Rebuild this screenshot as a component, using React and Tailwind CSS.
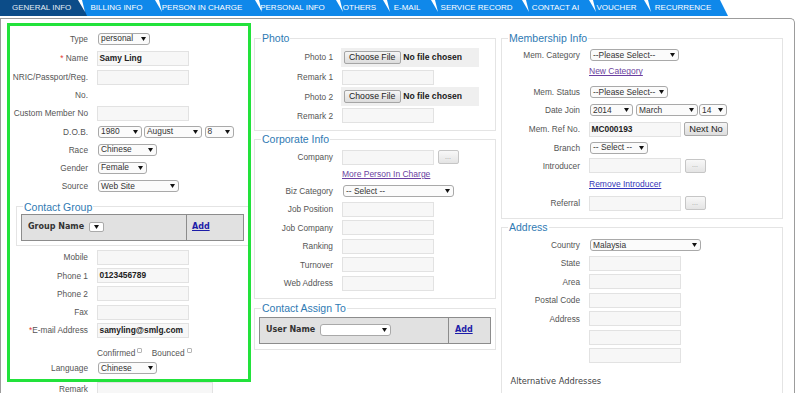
import React from 'react';

const tabs = [
  ['BILLING INFO', 'w-[77px] pr-[4px]'],
  ['PERSON IN CHARGE', 'w-[100px] pr-[10px]'],
  ['PERSONAL INFO', 'w-[81px] pr-[10px]'],
  ['OTHERS', 'w-[47px] pr-[4px]'],
  ['E-MAIL', 'w-[48px] pr-[4px]'],
  ['SERVICE RECORD', 'w-[91px] pr-[4px]'],
  ['CONTACT AI', 'w-[67px] pr-[4px]'],
  ['VOUCHER', 'w-[55px] pr-[4px]'],
  ['RECURRENCE', 'w-[82px] pr-[8px]'],
];

function Notch() {
  return (
    <svg className="absolute -left-[2px] top-0" width="8" height="13" viewBox="0 0 8 13">
      <polygon points="0,0 4,0 7,12" fill="#ffffff" />
    </svg>
  );
}

function Tabs() {
  return (
    <div className="flex h-[16px] w-[728px] bg-[#0f88ea] [clip-path:polygon(0_0,720px_0,728px_100%,0_100%)]">
      <div className="-mr-[7px] flex w-[87px] shrink-0 items-center bg-[#0c4c88] pl-[12px] text-[8px] leading-none whitespace-nowrap text-[#e4edf5] [clip-path:polygon(0_0,80px_0,87px_100%,0_100%)]">
        GENERAL INFO
      </div>
      {tabs.map(([name, w]) => (
        <div key={name} className={`relative flex shrink-0 items-center justify-center text-[8px] leading-none whitespace-nowrap text-white ${w}`}>
          <Notch />
          {name}
        </div>
      ))}
    </div>
  );
}

function Caret() {
  return (
    <svg width="5" height="4" viewBox="0 0 5 4" className="shrink-0">
      <polygon points="0,0 5,0 2.5,4" fill="#111" />
    </svg>
  );
}

function Select({ value, w, bg = 'bg-[#fbfbfb]' }) {
  return (
    <div className={`ml-[1px] flex h-[12px] items-center justify-between rounded-[3px] border border-[#a9a9a9] pl-[2px] pr-[3px] text-[8.4px] leading-none text-[#333] ${bg} ${w}`}>
      <span className="whitespace-nowrap">{value}</span>
      <Caret />
    </div>
  );
}

function Input({ value, w = 'w-[92px]' }) {
  return (
    <div className={`flex h-[15px] items-center border border-[#e2e2e2] bg-[#f7f7f7] pl-[1.5px] text-[8.4px] font-bold text-[#222] ${w}`}>
      {value}
    </div>
  );
}

function Dots() {
  return (
    <div className="ml-[3.5px] flex h-[14px] w-[21px] items-center justify-center rounded-[2px] border border-[#c6c6c6] bg-linear-to-b from-[#f8f8f8] to-[#e4e4e4] pb-[2px] text-[7px] leading-none text-[#9a9a9a]">
      ...
    </div>
  );
}

function FileInput() {
  return (
    <div className="-ml-[1.3px] flex h-[19px] w-[138px] items-center bg-[#efefef] pl-[3px]">
      <div className="flex h-[13px] w-[57px] items-center justify-center rounded-[2px] border border-[#a5a5a5] bg-linear-to-b from-[#f6f6f6] to-[#dcdcdc] text-[8.7px] leading-none text-[#222]">
        Choose File
      </div>
      <span className="ml-[2.5px] text-[8.6px] font-bold text-[#1a1a1a]">No file chosen</span>
    </div>
  );
}

function Row({ label, h, children }) {
  return (
    <div className={`flex items-center ${h}`}>
      <div className="w-[78px] shrink-0 text-right text-[8.3px] leading-[12px] whitespace-nowrap text-[#555]">{label}</div>
      <div className="ml-[9px] flex items-center">{children}</div>
    </div>
  );
}

function LinkRow({ h, color, children }) {
  return (
    <div className={`flex items-center pl-[87px] ${h}`}>
      <span className={`text-[8.5px] underline ${color}`}>{children}</span>
    </div>
  );
}

function Box({ title, className = '', children }) {
  return (
    <fieldset className={`border border-[#e4e4e4] ${className}`}>
      <legend className="ml-[6px] px-[1px] text-[10.5px] leading-[12px] text-[#2f7ab3]">{title}</legend>
      {children}
    </fieldset>
  );
}

function Check() {
  return <span className="mt-[1px] ml-[2px] h-[5px] w-[5px] self-start rounded-[1px] border border-[#b5b5b5] bg-white" />;
}

const req = <span className="text-[#e53935]">*</span>;

function LeftColumn() {
  return (
    <div className="ml-[6px] mt-[4px] flex w-[244px] shrink-0 flex-col">
      <div className="border-[3px] border-[#22e23b] pt-[3px] pb-[2px]">
        <Row label="Type" h="h-[19px]"><Select value="personal" w="w-[52px]" /></Row>
        <Row label={<>{req} Name</>} h="h-[20px]"><Input value="Samy Ling" /></Row>
        <div className="flex h-[36px] items-start">
          <div className="w-[78px] shrink-0 text-right text-[8.3px] leading-[18px] whitespace-nowrap text-[#555]">
            NRIC/Passport/Reg.<br />No.
          </div>
          <div className="ml-[9px] mt-[2px]"><Input /></div>
        </div>
        <Row label="Custom Member No" h="h-[18px]"><Input /></Row>
        <Row label="D.O.B." h="h-[19px]">
          <Select value="1980" w="w-[44px]" />
          <Select value="August" w="w-[58px] ml-[2px]" />
          <Select value="8" w="w-[29px] ml-[2.5px]" />
        </Row>
        <Row label="Race" h="h-[17px]"><Select value="Chinese" w="w-[59px]" /></Row>
        <Row label="Gender" h="h-[19px]"><Select value="Female" w="w-[49px]" /></Row>
        <Row label="Source" h="h-[18.5px]"><Select value="Web Site" w="w-[81px]" /></Row>

        <Box title="Contact Group" className="mt-[5px] ml-[6px] border-r-0 pb-[4px]">
          <div className="ml-[4px] mt-[1px] flex h-[27px] w-[223px] border border-[#8c8c8c] bg-[#e1e1e1]">
            <div className="flex flex-1 items-center pl-[6px]">
              <span className="font-['DejaVu_Sans',sans-serif] text-[8px] font-bold text-[#333]">Group Name</span>
              <div className="ml-[4.5px] flex h-[10px] w-[15px] items-center justify-center rounded-[2px] border border-[#aaa] bg-white">
                <Caret />
              </div>
            </div>
            <div className="flex w-[57px] items-center border-l border-[#8c8c8c] pl-[5px]">
              <span className="font-['DejaVu_Sans',sans-serif] text-[8px] font-bold text-[#1c1ca8] underline">Add</span>
            </div>
          </div>
        </Box>

        <div className="mt-[2.6px]">
          <Row label="Mobile" h="h-[18.3px]"><Input /></Row>
          <Row label="Phone 1" h="h-[18.3px]"><Input value="0123456789" /></Row>
          <Row label="Phone 2" h="h-[18.3px]"><Input /></Row>
          <Row label="Fax" h="h-[18.3px]"><Input /></Row>
          <Row label={<>{req}E-mail Address</>} h="h-[18.3px]"><Input value="samyling@smlg.com" /></Row>
        </div>
        <div className="flex pl-[87px] pt-[7px] text-[8.3px] leading-[13px] text-[#555]">
          <span>Confirmed</span>
          <Check />
          <span className="ml-[9.5px]">Bounced</span>
          <Check />
        </div>
        <Row label="Language" h="h-[17.3px]"><Select value="Chinese" w="w-[59px]" /></Row>
      </div>
      <div className="pl-[3px]">
        <Row label="Remark" h="h-[15px]"><Input w="w-[116px]" /></Row>
      </div>
    </div>
  );
}

function MiddleColumn() {
  return (
    <div className="ml-[3px] mt-[13px] flex w-[242px] shrink-0 flex-col">
      <Box title="Photo" className="pt-[2px] pb-[6px]">
        <Row label="Photo 1" h="h-[22px]"><FileInput /></Row>
        <Row label="Remark 1" h="h-[18px]"><Input /></Row>
        <Row label="Photo 2" h="h-[21px]"><FileInput /></Row>
        <Row label="Remark 2" h="h-[17px]"><Input /></Row>
      </Box>

      <Box title="Corporate Info" className="mt-[2px] pt-[2px] pb-[5.5px]">
        <Row label="Company" h="h-[20px]"><Input /><Dots /></Row>
        <LinkRow h="h-[15px]" color="text-[#6b3fa0]">More Person In Charge</LinkRow>
        <Row label="Biz Category" h="h-[18px]"><Select value="-- Select --" w="w-[111px]" /></Row>
        <Row label="Job Position" h="h-[18.5px]"><Input /></Row>
        <Row label="Job Company" h="h-[18.5px]"><Input /></Row>
        <Row label="Ranking" h="h-[18.5px]"><Input /></Row>
        <Row label="Turnover" h="h-[18.5px]"><Input /></Row>
        <Row label="Web Address" h="h-[18.5px]"><Input /></Row>
      </Box>

      <Box title="Contact Assign To" className="mt-[3px] pb-[5px]">
        <div className="mx-[4px] mt-[2.7px] flex h-[27.3px] border border-[#8c8c8c] bg-[#e1e1e1]">
          <div className="flex flex-1 items-center pl-[6px]">
            <span className="font-['DejaVu_Sans',sans-serif] text-[8px] font-bold text-[#333]">User Name</span>
            <Select value="" w="w-[71px] ml-[5px]" bg="bg-white" />
          </div>
          <div className="flex w-[42px] items-center border-l border-[#8c8c8c] pl-[6px]">
            <span className="font-['DejaVu_Sans',sans-serif] text-[8px] font-bold text-[#1c1ca8] underline">Add</span>
          </div>
        </div>
      </Box>
    </div>
  );
}

function RightColumn() {
  return (
    <div className="ml-[5px] mt-[13px] flex w-[282px] shrink-0 flex-col">
      <Box title="Membership Info" className="pt-[2px] pb-[4.5px]">
        <Row label="Mem. Category" h="h-[18.5px]"><Select value="--Please Select--" w="w-[89px]" /></Row>
        <LinkRow h="h-[14.5px]" color="text-[#6b3fa0]">New Category</LinkRow>
        <div className="mt-[3.5px]">
          <Row label="Mem. Status" h="h-[18.5px]"><Select value="--Please Select--" w="w-[78px]" /></Row>
        </div>
        <Row label="Date Join" h="h-[18.5px]">
          <Select value="2014" w="w-[43px]" />
          <Select value="March" w="w-[62px] ml-[3px]" />
          <Select value="14" w="w-[28px] ml-[1px]" />
        </Row>
        <Row label="Mem. Ref No." h="h-[19.5px]">
          <Input value="MC000193" />
          <div className="ml-[3px] flex h-[14px] w-[44px] items-center justify-center rounded-[2px] border border-[#aaa] bg-linear-to-b from-[#f6f6f6] to-[#dddddd] text-[9.3px] leading-none text-[#222]">
            Next No
          </div>
        </Row>
        <Row label="Branch" h="h-[17px]"><Select value="-- Select --" w="w-[58px]" /></Row>
        <Row label="Introducer" h="h-[19.5px]"><Input /><Dots /></Row>
        <LinkRow h="h-[17px]" color="text-[#3434b8]">Remove Introducer</LinkRow>
        <Row label="Referral" h="h-[21px]"><Input /><Dots /></Row>
      </Box>

      <Box title="Address" className="mt-[2px] pt-[2.5px] pb-[40px]">
        <Row label="Country" h="h-[18.5px]"><Select value="Malaysia" w="w-[111px]" /></Row>
        <Row label="State" h="h-[18.5px]"><Input /></Row>
        <Row label="Area" h="h-[18.5px]"><Input /></Row>
        <Row label="Postal Code" h="h-[18.5px]"><Input /></Row>
        <Row label="Address" h="h-[18.5px]"><Input /></Row>
        <Row label="" h="h-[18.5px]"><Input /></Row>
        <Row label="" h="h-[18.5px]"><Input /></Row>
        <div className="pt-[10px] pl-[8.5px] font-['DejaVu_Sans',sans-serif] text-[8.3px] leading-[13px] text-[#444]">
          Alternative Addresses
        </div>
      </Box>
    </div>
  );
}

export default function App() {
  return (
    <div className="h-[393px] w-[800px] overflow-hidden bg-white font-['Liberation_Sans',Arial,sans-serif] text-[8.3px] text-[#555]">
      <Tabs />
      <div className="mt-[2px] h-[420px] w-[795px] rounded-tr-[5px] border border-b-0 border-[#9c9c9c]">
        <div className="flex items-start">
          <LeftColumn />
          <MiddleColumn />
          <RightColumn />
        </div>
      </div>
    </div>
  );
}
